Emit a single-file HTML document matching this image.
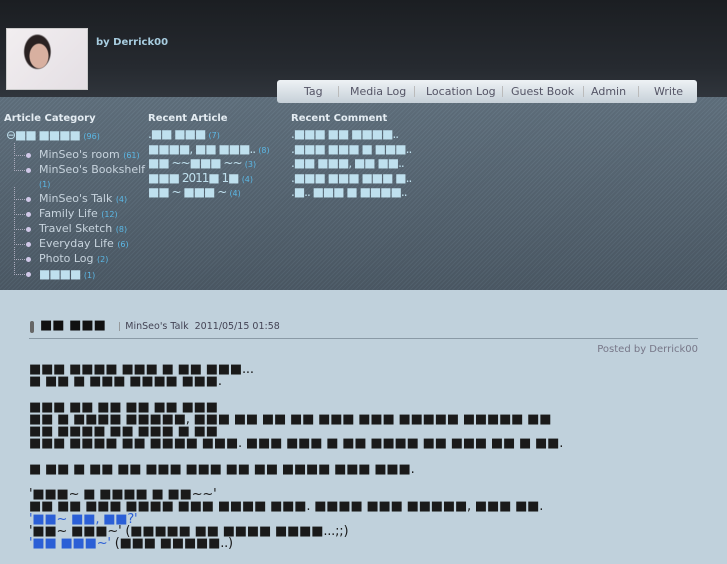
<!DOCTYPE html>
<html><head><meta charset="utf-8"><style>
body{margin:0;width:727px;height:545px;overflow:hidden;font-family:"DejaVu Sans","Liberation Sans",sans-serif;background:#c0d1dc;position:relative}
.hd{position:absolute;left:0;top:0;width:727px;height:97px;background:linear-gradient(#1b1e22,#262a30 70%,#30353c)}
.st{position:absolute;left:0;top:97px;width:727px;height:193px;background:repeating-linear-gradient(135deg,#5e6e7b 0 1px,#54626e 1px 3px);}
.st:after{content:"";position:absolute;inset:0;background:linear-gradient(rgba(120,140,155,.25),rgba(40,50,60,.25))}
.pic{position:absolute;left:6px;top:28px;width:80px;height:60px;border:1px solid #ccc;background:radial-gradient(ellipse 10px 13px at 40% 45%,#d8b0a0 0 90%,transparent 100%),radial-gradient(ellipse 14px 18px at 38% 38%,#2a2222 0 90%,transparent 100%),linear-gradient(135deg,#f2eef0,#e4dfe4)}
.by{position:absolute;left:96px;top:37px;color:#a8cde0;font-size:10px;font-weight:bold}
.nav{position:absolute;left:277px;top:80px;width:420px;height:23px;background:linear-gradient(#eef2f5,#c6d0d8);border-radius:3px;font-size:11px;color:#556;z-index:2}
.nav span{position:absolute;top:5px}
.nav i{position:absolute;top:6px;width:1px;height:11px;background:#bbb}
.col{position:absolute;top:113px;z-index:2;font-size:10px;color:#c8d8e4}
.col h3{margin:0 0 4px;font-size:10px;font-weight:bold;color:#e4ecf2}
.b{color:#bfe0ee;font-size:12px;letter-spacing:-1px}
.n{color:#5bb8e6;font-size:8px}
.cat div{position:relative;padding-left:35px;font-size:11px;color:#c8d4de;line-height:14px}
.cat div:before{content:"";position:absolute;left:10px;top:-5px;width:12px;height:12px;border-left:1px dotted #aab;border-bottom:1px dotted #aab}
.cat div:after{content:"";position:absolute;left:22px;top:5px;width:5px;height:5px;border-radius:50%;background:#d0c8e8}
.cat div.r:before,.cat div.r:after{display:none}
.ra div{line-height:12.5px}
.ct{position:absolute;left:40px;top:318px;font-size:13px;color:#111}
.line{position:absolute;left:29px;top:338px;width:669px;height:1px;background:#8a9aa6}
.body{position:absolute;left:29px;top:364px;font-size:13px;color:#1a1a1a;line-height:12.3px;letter-spacing:-0.2px}
.body p{margin:0 0 13px}
.blu{color:#2b5fd6}
</style></head><body>
<div class="hd"></div><div class="st"></div>
<div class="pic"></div>
<div class="by">by Derrick00</div>
<div class="nav">
<span style="left:27px">Tag</span><i style="left:61px"></i>
<span style="left:73px">Media Log</span><i style="left:137px"></i>
<span style="left:149px">Location Log</span><i style="left:225px"></i>
<span style="left:234px">Guest Book</span><i style="left:306px"></i>
<span style="left:314px">Admin</span><i style="left:361px"></i>
<span style="left:377px">Write</span>
</div>
<div class="col" style="left:4px">
<h3>Article Category</h3>
<div class="cat">
<div class="r" style="padding-left:2px;margin-bottom:4px"><span class="b">⊖■■ ■■■■</span> <span class="n">(96)</span></div>
<div>MinSeo's room <span class="n">(61)</span></div>
<div>MinSeo's Bookshelf<br><span class="n">(1)</span></div>
<div>MinSeo's Talk <span class="n">(4)</span></div>
<div>Family Life <span class="n">(12)</span></div>
<div>Travel Sketch <span class="n">(8)</span></div>
<div>Everyday Life <span class="n">(6)</span></div>
<div>Photo Log <span class="n">(2)</span></div>
<div><span class="b">■■■■</span> <span class="n">(1)</span></div>
</div></div>
<div class="col ra" style="left:148px">
<h3>Recent Article</h3>
<div><span class="b">.■■ ■■■</span> <span class="n">(7)</span></div>
<div><span class="b">■■■■, ■■ ■■■..</span> <span class="n">(8)</span></div>
<div><span class="b">■■ ~~■■■ ~~</span> <span class="n">(3)</span></div>
<div><span class="b">■■■ 2011■ 1■</span> <span class="n">(4)</span></div>
<div><span class="b">■■ ~ ■■■ ~</span> <span class="n">(4)</span></div>
</div>
<div class="col ra" style="left:291px">
<h3>Recent Comment</h3>
<div><span class="b">.■■■ ■■ ■■■■..</span></div>
<div><span class="b">.■■■ ■■■ ■ ■■■..</span></div>
<div><span class="b">.■■ ■■■, ■■ ■■..</span></div>
<div><span class="b">.■■■ ■■■ ■■■ ■..</span></div>
<div><span class="b">.■.. ■■■ ■ ■■■■..</span></div>
</div>
<div style="position:absolute;left:30px;top:321px;width:4px;height:12px;border-radius:2px;background:#666"></div>
<div class="ct"><b>■■ ■■■</b> <span style="color:#888;font-size:9px;margin-left:8px">|</span> <span style="font-size:9.5px;color:#445">MinSeo's Talk&nbsp; 2011/05/15 01:58</span></div>
<div class="line"></div>
<div style="position:absolute;right:29px;top:344px;font-size:10px;color:#778">Posted by Derrick00</div>
<div class="body">
<p>■■■ ■■■■ ■■■ ■ ■■ ■■■...<br>■ ■■ ■ ■■■ ■■■■ ■■■.</p>
<p>■■■ ■■ ■■ ■■ ■■ ■■■<br>■■ ■ ■■■■ ■■■■■, ■■■ ■■ ■■ ■■ ■■■ ■■■ ■■■■■ ■■■■■ ■■<br>■■ ■■■■ ■■ ■■■ ■ ■■<br>■■■ ■■■■ ■■ ■■■■ ■■■. ■■■ ■■■ ■ ■■ ■■■■ ■■ ■■■ ■■ ■ ■■.</p>
<p>■ ■■ ■ ■■ ■■ ■■■ ■■■ ■■ ■■ ■■■■ ■■■ ■■■.</p>
<p>'■■■~ ■ ■■■■ ■ ■■~~'<br>■■ ■■ ■■■ ■■■■ ■■■ ■■■■ ■■■. ■■■■ ■■■ ■■■■■, ■■■ ■■.<br><span class="blu">'■■~ ■■, ■■?'</span><br>'■■~ ■■■~' (■■■■■ ■■ ■■■■ ■■■■...;;)<br><span class="blu">'■■ ■■■~'</span> (■■■ ■■■■■..)</p>
</div>
</body></html>
